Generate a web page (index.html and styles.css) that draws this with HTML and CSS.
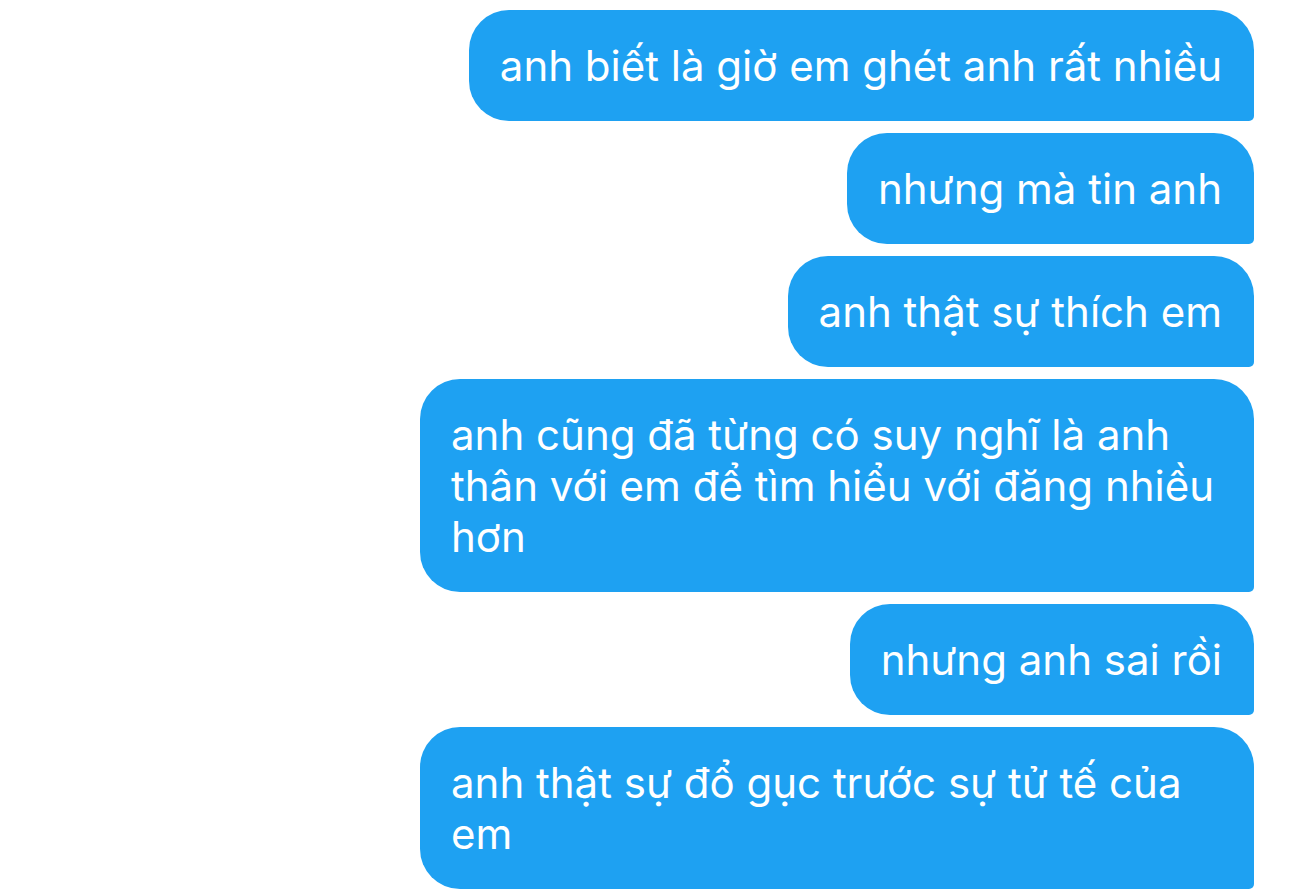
FILE: index.html
```html
<!DOCTYPE html>
<html lang="vi">
<head>
  <meta charset="UTF-8" />
  <title>Tin nhắn</title>
  <link rel="stylesheet" href="styles.css">
</head>
<body>
  <div class="thread">
    <div class="bubble">anh biết là giờ em ghét anh rất nhiều</div>
    <div class="bubble">nhưng mà tin anh</div>
    <div class="bubble">anh thật sự thích em</div>
    <div class="bubble wide">anh cũng đã từng có suy nghĩ là anh<br>thân với em để tìm hiểu với đăng nhiều<br>hơn</div>
    <div class="bubble">nhưng anh sai rồi</div>
    <div class="bubble wide">anh thật sự đổ gục trước sự tử tế của<br>em</div>
  </div>
</body>
</html>
```

FILE: styles.css
```css
body {
  margin: 0;
  background: #fff;
  font-family: Inter, "Noto Sans", sans-serif;
}

.thread {
  display: flex;
  flex-direction: column;
  align-items: flex-end;
  gap: 12px;
  padding: 10px 36px 0 0;
}

.bubble {
  box-sizing: border-box;
  max-width: 834px;
  padding: 30px 32px 30px 31px;
  background: #1ea1f2;
  color: #fff;
  font-size: 42px;
  line-height: 51px;
  border-radius: 40px 40px 5px 40px;
  white-space: nowrap;
}

.bubble.wide {
  width: 834px;
}
```
